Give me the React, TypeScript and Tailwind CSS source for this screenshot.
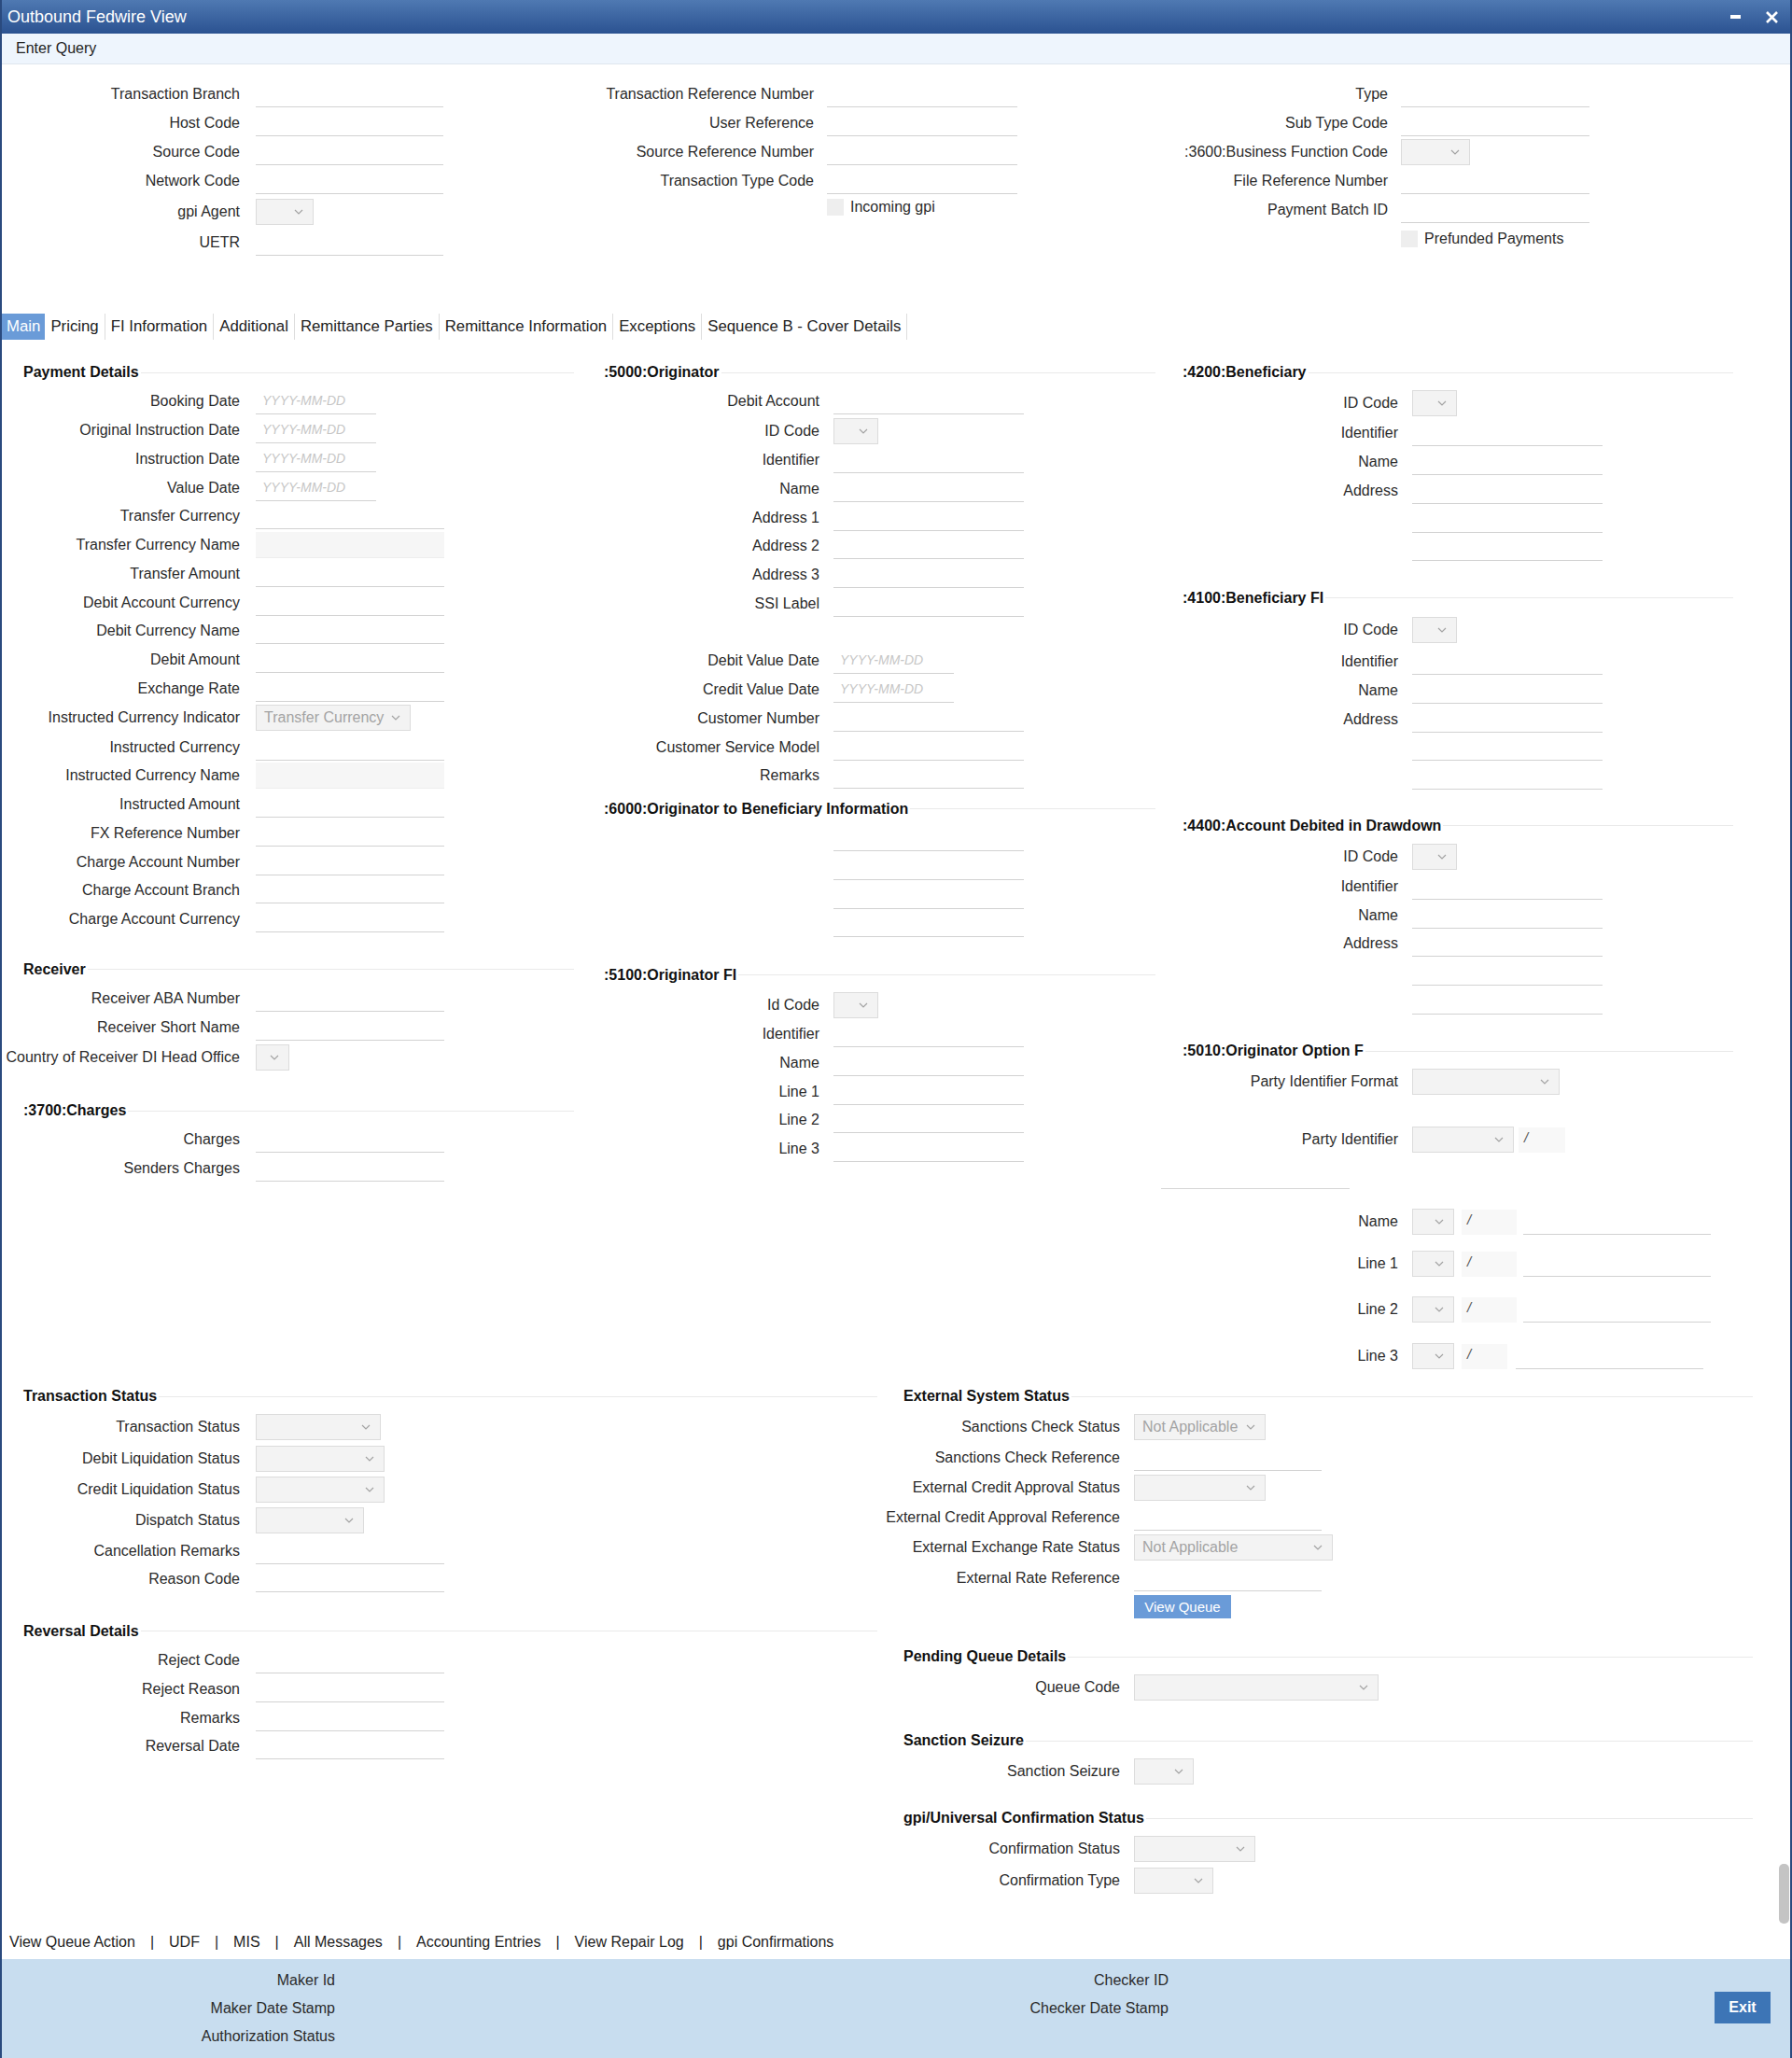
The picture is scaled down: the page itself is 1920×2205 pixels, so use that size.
import React from 'react';

const Chevron = () => (
  <svg width="10" height="6" viewBox="0 0 10 6" fill="none" className="shrink-0">
    <path d="M1 1l4 4 4-4" stroke="#a3a3a3" strokeWidth="1.2" />
  </svg>
);

function Sel({ w = 'w-[48px]', text, className = '' }: { w?: string; text?: string; className?: string }) {
  return (
    <div className={`${w} ${className} h-[28px] shrink-0 flex items-center justify-between bg-[#f3f3f3] border border-[#dcdcdc] pl-[8px] pr-[10px]`}>
      <span className="text-[#a3a3a3] whitespace-nowrap">{text}</span>
      <Chevron />
    </div>
  );
}

function Txt({ w = 'w-[203px]', className = '' }: { w?: string; className?: string }) {
  return <div className={`${w} ${className} h-[28px] shrink-0 border-b border-[#d2d2d2]`} />;
}

const Dis = () => <div className="w-[202px] h-[28px] shrink-0 bg-[#f6f6f6] border-b border-[#ededed]" />;

const DateIn = () => (
  <div className="w-[129px] h-[28px] shrink-0 border-b border-[#d2d2d2] pl-[7px] flex items-center text-[14px] italic text-[#c6c6c6]">YYYY-MM-DD</div>
);

function Slash({ w, className = '' }: { w: string; className?: string }) {
  return <div className={`${w} ${className} h-[27px] shrink-0 bg-[#f8f8f8] pl-[6px] text-[#555] text-[15px] italic leading-[22px]`}>/</div>;
}

const Check = ({ label }: { label: string }) => (
  <div className="flex items-center gap-[7px]">
    <div className="w-[18px] h-[18px] bg-[#eeeeee]" />
    <span>{label}</span>
  </div>
);

type RowProps = { label?: string; h?: string; lw: string; gap: string; children?: React.ReactNode };
function Row({ label, h = 'h-[30.75px]', lw, gap, children }: RowProps) {
  return (
    <div className={`flex items-center ${h} ${gap}`}>
      <div className={`${lw} shrink-0 text-right whitespace-nowrap`}>{label}</div>
      {children}
    </div>
  );
}

type R = Omit<RowProps, 'lw' | 'gap'>;
const A = (p: R) => <Row lw="w-[255px]" gap="gap-[17px]" {...p} />;
const B = (p: R) => <Row lw="w-[254px]" gap="gap-[15px]" {...p} />;
const T2 = (p: R) => <Row lw="w-[255px]" gap="gap-[14px]" {...p} />;
const BR = (p: R) => <Row lw="w-[257px]" gap="gap-[15px]" {...p} />;

function Head({ title, className = '' }: { title: string; className?: string }) {
  return (
    <div className={`flex items-center h-[32px] ${className}`}>
      <span className="font-bold text-[#111] whitespace-nowrap">{title}</span>
      <div className="flex-1 h-px bg-[#e9e9e9] ml-[2px]" />
    </div>
  );
}

const tabs = ['Main', 'Pricing', 'FI Information', 'Additional', 'Remittance Parties', 'Remittance Information', 'Exceptions', 'Sequence B - Cover Details'];
const links = ['View Queue Action', 'UDF', 'MIS', 'All Messages', 'Accounting Entries', 'View Repair Log', 'gpi Confirmations'];

export default function App() {
  return (
    <div className="w-[1920px] h-[2205px] flex flex-col bg-white border-x-2 border-[#2a4a7e] font-['Liberation_Sans',Arial,sans-serif] text-[16px] text-[#2b2b2b] overflow-hidden">
      {/* title */}
      <div className="h-[36px] shrink-0 flex items-center justify-between bg-linear-to-b from-[#4f79b2] to-[#2b5291] pl-[6px] pr-[12px]">
        <span className="text-white text-[18px]">Outbound Fedwire View</span>
        <div className="flex items-center gap-[26px]">
          <svg width="11" height="4" viewBox="0 0 11 4"><rect width="11" height="4" fill="#fff" /></svg>
          <svg width="15" height="15" viewBox="0 0 15 15"><path d="M2 2l11 11M13 2L2 13" stroke="#fff" strokeWidth="2.6" /></svg>
        </div>
      </div>
      <div className="h-[33px] shrink-0 flex items-center bg-[#eef5fd] border-b border-[#dfe6ee] pl-[15px] text-[#222]">Enter Query</div>

      <div className="flex-1 relative overflow-hidden">
        {/* top query form */}
        <div className="grid grid-cols-[615px_615px_1fr] pt-[16px]">
          <div className="flex flex-col">
            <A label="Transaction Branch" h="h-[31px]"><Txt w="w-[201px]" /></A>
            <A label="Host Code" h="h-[31px]"><Txt w="w-[201px]" /></A>
            <A label="Source Code" h="h-[31px]"><Txt w="w-[201px]" /></A>
            <A label="Network Code" h="h-[31px]"><Txt w="w-[201px]" /></A>
            <A label="gpi Agent" h="h-[35px]"><Sel w="w-[62px]" /></A>
            <A label="UETR" h="h-[31px]"><Txt w="w-[201px]" /></A>
          </div>
          <div className="flex flex-col">
            <T2 label="Transaction Reference Number" h="h-[31px]"><Txt w="w-[204px]" /></T2>
            <T2 label="User Reference" h="h-[31px]"><Txt w="w-[204px]" /></T2>
            <T2 label="Source Reference Number" h="h-[31px]"><Txt w="w-[204px]" /></T2>
            <T2 label="Transaction Type Code" h="h-[31px]"><Txt w="w-[204px]" /></T2>
            <T2 h="h-[26px]"><Check label="Incoming gpi" /></T2>
          </div>
          <div className="flex flex-col">
            <T2 label="Type" h="h-[31px]"><Txt w="w-[202px]" /></T2>
            <T2 label="Sub Type Code" h="h-[31px]"><Txt w="w-[202px]" /></T2>
            <T2 label=":3600:Business Function Code" h="h-[31px]"><Sel w="w-[74px]" /></T2>
            <T2 label="File Reference Number" h="h-[31px]"><Txt w="w-[202px]" /></T2>
            <T2 label="Payment Batch ID" h="h-[31px]"><Txt w="w-[202px]" /></T2>
            <T2 h="h-[31px]"><Check label="Prefunded Payments" /></T2>
          </div>
        </div>

        {/* tabs */}
        <div className="flex h-[28px] mt-[61px] text-[16.8px]">
          {tabs.map((t, i) => (
            <div key={t} className={`flex items-center whitespace-nowrap ${i === 0 ? 'px-[5px] bg-[#6a9bd8] text-white' : 'px-[6px] border-r border-[#dddddd] text-[#222]'}`}>{t}</div>
          ))}
        </div>

        {/* main tab */}
        <div className="grid grid-cols-[622px_620px_1fr] mt-[19px] items-start">
          <div className="flex flex-col">
            <Head title="Payment Details" className="pl-[23px] pr-[9px]" />
            <A label="Booking Date"><DateIn /></A>
            <A label="Original Instruction Date"><DateIn /></A>
            <A label="Instruction Date"><DateIn /></A>
            <A label="Value Date"><DateIn /></A>
            <A label="Transfer Currency"><Txt w="w-[202px]" /></A>
            <A label="Transfer Currency Name"><Dis /></A>
            <A label="Transfer Amount"><Txt w="w-[202px]" /></A>
            <A label="Debit Account Currency"><Txt w="w-[202px]" /></A>
            <A label="Debit Currency Name"><Txt w="w-[202px]" /></A>
            <A label="Debit Amount"><Txt w="w-[202px]" /></A>
            <A label="Exchange Rate"><Txt w="w-[202px]" /></A>
            <A label="Instructed Currency Indicator" h="h-[32px]"><Sel w="w-[166px]" text="Transfer Currency" /></A>
            <A label="Instructed Currency"><Txt w="w-[202px]" /></A>
            <A label="Instructed Currency Name"><Dis /></A>
            <A label="Instructed Amount"><Txt w="w-[202px]" /></A>
            <A label="FX Reference Number"><Txt w="w-[202px]" /></A>
            <A label="Charge Account Number"><Txt w="w-[202px]" /></A>
            <A label="Charge Account Branch"><Txt w="w-[202px]" /></A>
            <A label="Charge Account Currency"><Txt w="w-[202px]" /></A>

            <Head title="Receiver" className="pl-[23px] pr-[9px] mt-[22px]" />
            <A label="Receiver ABA Number"><Txt w="w-[202px]" /></A>
            <A label="Receiver Short Name"><Txt w="w-[202px]" /></A>
            <A label="Country of Receiver DI Head Office" h="h-[33px]"><Sel w="w-[36px]" /></A>

            <Head title=":3700:Charges" className="pl-[23px] pr-[9px] mt-[25px]" />
            <A label="Charges"><Txt w="w-[202px]" /></A>
            <A label="Senders Charges"><Txt w="w-[202px]" /></A>
          </div>

          <div className="flex flex-col">
            <Head title=":5000:Originator" className="pl-[23px] pr-[6px]" />
            <B label="Debit Account"><Txt w="w-[204px]" /></B>
            <B label="ID Code" h="h-[32px]"><Sel w="w-[48px]" /></B>
            <B label="Identifier"><Txt w="w-[204px]" /></B>
            <B label="Name"><Txt w="w-[204px]" /></B>
            <B label="Address 1"><Txt w="w-[204px]" /></B>
            <B label="Address 2"><Txt w="w-[204px]" /></B>
            <B label="Address 3"><Txt w="w-[204px]" /></B>
            <B label="SSI Label"><Txt w="w-[204px]" /></B>
            <B />
            <B label="Debit Value Date"><DateIn /></B>
            <B label="Credit Value Date"><DateIn /></B>
            <B label="Customer Number"><Txt w="w-[204px]" /></B>
            <B label="Customer Service Model"><Txt w="w-[204px]" /></B>
            <B label="Remarks"><Txt w="w-[204px]" /></B>

            <Head title=":6000:Originator to Beneficiary Information" className="pl-[23px] pr-[6px] mt-[4px]" />
            <B><Txt w="w-[204px]" /></B>
            <B><Txt w="w-[204px]" /></B>
            <B><Txt w="w-[204px]" /></B>
            <B><Txt w="w-[204px]" /></B>

            <Head title=":5100:Originator FI" className="pl-[23px] pr-[6px] mt-[23px]" />
            <B label="Id Code" h="h-[32px]"><Sel w="w-[48px]" /></B>
            <B label="Identifier"><Txt w="w-[204px]" /></B>
            <B label="Name"><Txt w="w-[204px]" /></B>
            <B label="Line 1"><Txt w="w-[204px]" /></B>
            <B label="Line 2"><Txt w="w-[204px]" /></B>
            <B label="Line 3"><Txt w="w-[204px]" /></B>
          </div>

          <div className="flex flex-col">
            <Head title=":4200:Beneficiary" className="pl-[23px] pr-[61px]" />
            <B label="ID Code" h="h-[34px]"><Sel w="w-[48px]" /></B>
            <B label="Identifier"><Txt w="w-[204px]" /></B>
            <B label="Name"><Txt w="w-[204px]" /></B>
            <B label="Address"><Txt w="w-[204px]" /></B>
            <B><Txt w="w-[204px]" /></B>
            <B><Txt w="w-[204px]" /></B>

            <Head title=":4100:Beneficiary FI" className="pl-[23px] pr-[61px] mt-[22px]" />
            <B label="ID Code" h="h-[37px]"><Sel w="w-[48px]" /></B>
            <B label="Identifier"><Txt w="w-[204px]" /></B>
            <B label="Name"><Txt w="w-[204px]" /></B>
            <B label="Address"><Txt w="w-[204px]" /></B>
            <B><Txt w="w-[204px]" /></B>
            <B><Txt w="w-[204px]" /></B>

            <Head title=":4400:Account Debited in Drawdown" className="pl-[23px] pr-[61px] mt-[21px]" />
            <B label="ID Code" h="h-[34px]"><Sel w="w-[48px]" /></B>
            <B label="Identifier"><Txt w="w-[204px]" /></B>
            <B label="Name"><Txt w="w-[204px]" /></B>
            <B label="Address"><Txt w="w-[204px]" /></B>
            <B><Txt w="w-[204px]" /></B>
            <B><Txt w="w-[204px]" /></B>

            <Head title=":5010:Originator Option F" className="pl-[23px] pr-[61px] mt-[22px]" />
            <B label="Party Identifier Format" h="h-[34px]"><Sel w="w-[158px]" /></B>
            <B label="Party Identifier" h="h-[34px] mt-[28px]">
              <div className="flex items-center gap-[5px]"><Sel w="w-[109px]" /><Slash w="w-[50px]" /></div>
            </B>
            <div className="w-[202px] h-px bg-[#d6d6d6] mt-[35px]" />
            <B label="Name" h="h-[34px] mt-[18px]">
              <div className="flex items-center"><Sel w="w-[45px]" /><Slash w="w-[59px]" className="ml-[8px]" /><Txt w="w-[201px]" className="ml-[7px]" /></div>
            </B>
            <B label="Line 1" h="h-[34px] mt-[11px]">
              <div className="flex items-center"><Sel w="w-[45px]" /><Slash w="w-[59px]" className="ml-[8px]" /><Txt w="w-[201px]" className="ml-[7px]" /></div>
            </B>
            <B label="Line 2" h="h-[34px] mt-[15px]">
              <div className="flex items-center"><Sel w="w-[45px]" /><Slash w="w-[59px]" className="ml-[8px]" /><Txt w="w-[201px]" className="ml-[7px]" /></div>
            </B>
            <B label="Line 3" h="h-[34px] mt-[16px]">
              <div className="flex items-center"><Sel w="w-[45px]" /><Slash w="w-[49px]" className="ml-[8px]" /><Txt w="w-[201px]" className="ml-[9px]" /></div>
            </B>
          </div>
        </div>

        {/* status blocks */}
        <div className="grid grid-cols-[941px_1fr] mt-[10px] items-start">
          <div className="flex flex-col">
            <Head title="Transaction Status" className="pl-[23px] pr-[3px]" />
            <A label="Transaction Status" h="h-[34px]"><Sel w="w-[134px]" /></A>
            <A label="Debit Liquidation Status" h="h-[33px]"><Sel w="w-[138px]" /></A>
            <A label="Credit Liquidation Status" h="h-[33px]"><Sel w="w-[138px]" /></A>
            <A label="Dispatch Status" h="h-[34px]"><Sel w="w-[116px]" /></A>
            <A label="Cancellation Remarks"><Txt w="w-[202px]" /></A>
            <A label="Reason Code"><Txt w="w-[202px]" /></A>

            <Head title="Reversal Details" className="pl-[23px] pr-[3px] mt-[24px]" />
            <A label="Reject Code"><Txt w="w-[202px]" /></A>
            <A label="Reject Reason"><Txt w="w-[202px]" /></A>
            <A label="Remarks"><Txt w="w-[202px]" /></A>
            <A label="Reversal Date"><Txt w="w-[202px]" /></A>
          </div>

          <div className="flex flex-col">
            <Head title="External System Status" className="pl-[25px] pr-[40px]" />
            <BR label="Sanctions Check Status" h="h-[34px]"><Sel w="w-[141px]" text="Not Applicable" /></BR>
            <BR label="Sanctions Check Reference" h="h-[31px]"><Txt w="w-[201px]" /></BR>
            <BR label="External Credit Approval Status" h="h-[33px]"><Sel w="w-[141px]" /></BR>
            <BR label="External Credit Approval Reference" h="h-[31px]"><Txt w="w-[201px]" /></BR>
            <BR label="External Exchange Rate Status" h="h-[34px]"><Sel w="w-[213px]" text="Not Applicable" /></BR>
            <BR label="External Rate Reference" h="h-[31px]"><Txt w="w-[201px]" /></BR>
            <BR h="h-[25px] mt-[3px]">
              <div className="w-[104px] h-[25px] bg-[#6a9bd8] text-white text-[15px] flex items-center justify-center">View Queue</div>
            </BR>

            <Head title="Pending Queue Details" className="pl-[25px] pr-[40px] mt-[25px]" />
            <BR label="Queue Code" h="h-[34px]"><Sel w="w-[262px]" /></BR>

            <Head title="Sanction Seizure" className="pl-[25px] pr-[40px] mt-[24px]" />
            <BR label="Sanction Seizure" h="h-[34px]"><Sel w="w-[64px]" /></BR>

            <Head title="gpi/Universal Confirmation Status" className="pl-[25px] pr-[40px] mt-[17px]" />
            <BR label="Confirmation Status" h="h-[34px]"><Sel w="w-[130px]" /></BR>
            <BR label="Confirmation Type" h="h-[34px]"><Sel w="w-[85px]" /></BR>
          </div>
        </div>

        <div className="absolute right-[1px] bottom-[1px] w-[11px] h-[64px] rounded-[5px] bg-[#c4c4c4]" />
      </div>

      {/* links */}
      <div className="h-[37px] shrink-0 flex items-center pl-[8px] gap-[16px] text-[#222]">
        {links.map((l, i) => (
          <React.Fragment key={l}>
            {i > 0 && <span>|</span>}
            <span className="whitespace-nowrap">{l}</span>
          </React.Fragment>
        ))}
      </div>

      {/* audit footer */}
      <div className="h-[106px] shrink-0 flex bg-[#c8ddef] pt-[8px]">
        <div className="w-[357px] flex flex-col text-right">
          <div className="h-[30px] leading-[30px]">Maker Id</div>
          <div className="h-[30px] leading-[30px]">Maker Date Stamp</div>
          <div className="h-[30px] leading-[30px]">Authorization Status</div>
        </div>
        <div className="w-[893px] flex flex-col text-right">
          <div className="h-[30px] leading-[30px]">Checker ID</div>
          <div className="h-[30px] leading-[30px]">Checker Date Stamp</div>
        </div>
        <div className="flex-1 flex justify-end items-start pt-[27px] pr-[21px]">
          <div className="w-[60px] h-[34px] bg-[#3d75b6] text-white font-bold flex items-center justify-center">Exit</div>
        </div>
      </div>
    </div>
  );
}
